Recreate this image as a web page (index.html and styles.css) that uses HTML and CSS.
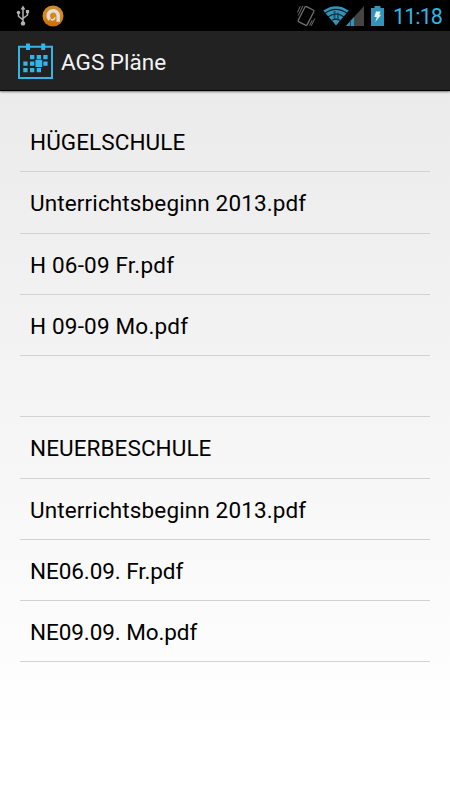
FILE: index.html
```
<!DOCTYPE html>
<html lang="de">
<head>
  <meta charset="UTF-8">
  <meta name="viewport" content="width=device-width, initial-scale=1.0">
  <title>AGS Pläne</title>
  <link rel="stylesheet" href="styles.css">
</head>
<body>
  <div class="status-bar">
    <svg class="usb" width="14" height="22" viewBox="0 0 14 22" fill="none" stroke="#b4b4b4" stroke-width="1.5">
      <path d="M7 18V3M2.5 8v3.2L7 15M11.5 7v3L7 13.5"/>
      <path d="M7 0.5L9.4 4.5H4.6z" fill="#b4b4b4" stroke="none"/>
      <circle cx="7" cy="18.4" r="2.2" fill="#b4b4b4" stroke="none"/>
      <circle cx="2.5" cy="7.5" r="1.7" fill="#b4b4b4" stroke="none"/>
      <path d="M9.9 5h3.2v3.2H9.9z" fill="#b4b4b4" stroke="none"/>
    </svg>
    <svg class="avast" width="22" height="22" viewBox="0 0 22 22">
      <defs>
        <linearGradient id="orange" x1="0" y1="0" x2="0" y2="1">
          <stop offset="0" stop-color="#d08a2a"/>
          <stop offset="0.5" stop-color="#d98716"/>
          <stop offset="1" stop-color="#c96a08"/>
        </linearGradient>
      </defs>
      <circle cx="11" cy="11" r="10.5" fill="url(#orange)"/>
      <path d="M7.8 14.4A5 5 0 1 1 16.2 11V16.8" fill="none" stroke="#dedede" stroke-width="3.5"/>
      <path d="M8.6 14.6Q12.2 15.6 13 12.4" fill="none" stroke="#dedede" stroke-width="1.6"/>
    </svg>

    <svg class="vibrate" width="20" height="22" viewBox="0 0 20 22" fill="none" stroke="#707070" stroke-width="1.3">
      <rect x="5" y="2.4" width="10" height="17" rx="1.3" transform="rotate(27 10 11)"/>
      <path d="M7 0.8L2.2 10.5M4.4 1.2L1.4 7.5M18.8 13.5L15.2 20.8M16.2 15.5L13.6 20.5" stroke-width="1"/>
    </svg>
    <svg class="wifi" width="26" height="20" viewBox="0 0 26 20">
      <path d="M13 19.5L0.3 4.5Q13 -4 25.7 4.5z" fill="#3493b8"/>
      <path d="M2 7.3Q13 -0.5 24 7.3M4.8 11Q13 5 21.2 11M8.3 14.7Q13 11.5 17.7 14.7" fill="none" stroke="#0a1d26" stroke-width="1.2"/>
      <path d="M10.6 5h1.9v8.5h-1.9zM14 6.5h1.8v8H14z" fill="#123645" opacity="0.7"/>
    </svg>
    <svg class="signal" width="18" height="20" viewBox="0 0 18 20">
      <path d="M18 0V20H0z" fill="#444"/>
      <path d="M8 11.1V20H0z" fill="#3493b8"/>
      <path d="M4.4 13.5V20" stroke="#123645" stroke-width="0.8"/>
    </svg>
    <svg class="battery" width="13" height="20" viewBox="0 0 13 20">
      <path d="M3.5 0h6v2H13v18H0V2h3.5z" fill="#3493b8"/>
      <path d="M5 5.5H9.6L8.2 8.8h2L4.3 16l1.5-4.9H3.3z" fill="#e6f3f8"/>
    </svg>
    <span class="clock">11:18</span>
  </div>

  <header class="action-bar">
    <svg class="logo" width="36" height="37" viewBox="0 0 36 37">
      <path d="M1 4.8H34V36H1z" fill="none" stroke="#33b5e5" stroke-width="2"/>
      <g fill="#33b5e5">
        <path d="M8 1.5h4V8H8zM23.2 1.5h4V8h-4z"/>
        <path d="M12 13h4.3v4.2H12zM18.7 13H23v4.2h-4.3zM25.3 13h4.3v4.2h-4.3z"/>
        <path d="M5.3 19.4h4.3v4.3H5.3zM12 19.4h4.3v4.3H12zM25.3 19.4h4.3v4.3h-4.3z"/>
        <path d="M5.3 26h4.3v4.2H5.3zM12 26h4.3v4.2H12zM18.7 26H23v4.2h-4.3z"/>
        <path d="M17.4 17.8h6.8V25h-6.8z"/>
      </g>
    </svg>
    <h1>AGS Pläne</h1>
  </header>

  <ul class="plans">
    <li>HÜGELSCHULE</li>
    <li class="start">Unterrichtsbeginn 2013.pdf</li>
    <li class="day">H 06-09 Fr.pdf</li>
    <li class="day">H 09-09 Mo.pdf</li>
    <li></li>
    <li>NEUERBESCHULE</li>
    <li class="start">Unterrichtsbeginn 2013.pdf</li>
    <li class="day-ne">NE06.09. Fr.pdf</li>
    <li class="day-ne">NE09.09. Mo.pdf</li>
  </ul>
</body>
</html>
```
FILE: styles.css
```
* {
  box-sizing: border-box;
}

body {
  margin: 0;
  height: 800px;
  overflow: hidden;
  font-family: Roboto, sans-serif;
  color: #000;
  background: linear-gradient(#e8e8e8, #fff 92%);
}

.status-bar {
  display: flex;
  align-items: center;
  height: 31px;
  padding: 0 8px 0 16px;
  background: #000;
}

.avast {
  margin-left: 11.5px;
}

.vibrate {
  margin-left: auto;
}

.wifi {
  margin-left: 7px;
}

.signal {
  margin-left: -3px;
}

.battery {
  margin-left: 7px;
}

.clock {
  width: 49px;
  padding-top: 2px;
  margin-left: 9px;
  font-size: 21.5px;
  line-height: 29px;
  letter-spacing: -0.9px;
  color: #33b5e5;
  white-space: nowrap;
}

.action-bar {
  display: flex;
  align-items: center;
  height: 60px;
  padding-left: 18px;
  background: #222;
  border-bottom: 1px solid #000;
  box-shadow: 0 1px 2px rgba(0, 0, 0, 0.5);
}

.action-bar h1 {
  margin: 0 0 0 7px;
  padding-top: 3px;
  font-size: 22.5px;
  font-weight: 400;
  color: #f3f3f3;
}

.plans {
  margin: 20px 20px 0;
  padding: 0;
  list-style: none;
}

.plans li {
  height: 61.25px;
  padding-left: 10px;
  border-bottom: 1px solid #d2d2d2;
  font-size: 22.5px;
  line-height: 63px;
  letter-spacing: 0.08px;
}

.plans .start {
  letter-spacing: 0.13px;
}

.plans .day {
  letter-spacing: 0.19px;
}

.plans .day-ne {
  letter-spacing: -0.08px;
}
```
